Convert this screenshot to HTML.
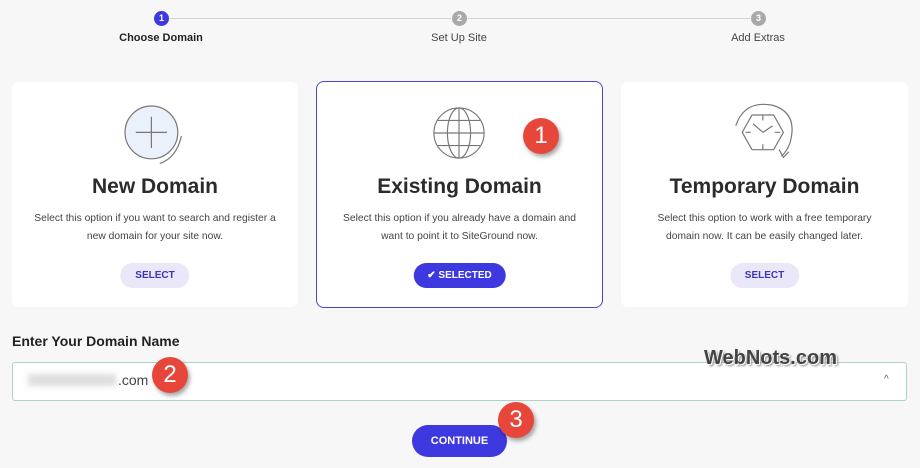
<!DOCTYPE html>
<html><head><style>
*{margin:0;padding:0;box-sizing:border-box}
body{width:920px;height:468px;background:#f7f7f7;font-family:"Liberation Sans",sans-serif;position:relative;overflow:hidden;color:#333}
.a{position:absolute}
.step{width:15px;height:15px;border-radius:50%;color:#fff;font-size:9px;font-weight:bold;text-align:center;line-height:15px;background:#a9a9a9}
.lbl{font-size:11px;color:#444;top:32px;transform:translateX(-50%);white-space:nowrap}
.line{height:1px;background:#d3d3d3;top:18px}
.card{background:#fff;border-radius:7px;top:82px;height:225px;text-align:center}
.card h2{position:absolute;top:93px;width:100%;font-size:21px;font-weight:bold;color:#2b2b2b}
.card p{position:absolute;top:128px;width:100%;font-size:10.3px;line-height:18px;color:#444}
.btn{position:absolute;top:181px;left:50%;transform:translateX(-50%);height:25px;border-radius:13px;font-size:10px;font-weight:bold;line-height:25px;padding:0 15px;background:#e9e7f8;color:#3b35b8}
.badge{width:36px;height:36px;border-radius:50%;background:#e6473a;color:#fff;font-size:24px;text-align:center;line-height:36px;box-shadow:2px 3px 4px rgba(0,0,0,.35)}
</style></head><body>
<div class="a line" style="left:170px;width:281px"></div>
<div class="a line" style="left:468px;width:282px"></div>
<div class="a step" style="left:154px;top:11px;background:#3d38e0">1</div>
<div class="a step" style="left:452px;top:11px">2</div>
<div class="a step" style="left:751px;top:11px">3</div>
<div class="a lbl" style="left:161px;font-weight:bold;color:#222">Choose Domain</div>
<div class="a lbl" style="left:459px">Set Up Site</div>
<div class="a lbl" style="left:758px">Add Extras</div>

<div class="a card" style="left:12px;width:286px">
<svg class="a" style="left:104px;top:18px" width="78" height="72" viewBox="0 0 64 60"><circle cx="29" cy="27" r="22" fill="#eaf1fb" stroke="#777" stroke-width="1"/><path d="M29 14V40M16 27H42" stroke="#777" stroke-width="1"/><path d="M54 30Q50 48 36 53" fill="none" stroke="#777" stroke-width="1"/></svg>
<h2>New Domain</h2><p>Select this option if you want to search and register a<br>new domain for your site now.</p><div class="btn">SELECT</div></div>

<div class="a card" style="left:317px;width:285px;box-shadow:0 0 0 1px #4a44c8">
<svg class="a" style="left:114px;top:23px" width="56" height="56" viewBox="0 0 58 58"><g fill="none" stroke="#777" stroke-width="1.2"><circle cx="29" cy="29" r="26"/><ellipse cx="29" cy="29" rx="12" ry="26"/><path d="M29 3V55M3 29H55M7 16H51M7 42H51"/></g></svg>
<h2>Existing Domain</h2><p>Select this option if you already have a domain and<br>want to point it to SiteGround now.</p><div class="btn" style="background:#3d38e0;color:#fff;padding:0 14px">✔ SELECTED</div></div>

<div class="a card" style="left:621px;width:287px">
<svg class="a" style="left:106px;top:20px" width="76" height="65" viewBox="0 0 70 60"><g fill="none" stroke="#777" stroke-width="1.1"><path d="M14 28L23 12H43L52 28L43 44H23Z"/><path d="M33 12V17M33 39V44M17 28H22M44 28H49M33 28L24 20M33 28L42 22"/><path d="M8 22Q16 -2 42 3Q66 10 58 38Q55 46 50 50"/><path d="M48 44L52 51L57 46"/></g></svg>
<h2>Temporary Domain</h2><p>Select this option to work with a free temporary<br>domain now. It can be easily changed later.</p><div class="btn">SELECT</div></div>

<div class="a badge" style="left:523px;top:118px">1</div>

<div class="a" style="left:12px;top:333px;font-size:14px;font-weight:bold;color:#222">Enter Your Domain Name</div>
<div class="a" style="left:12px;top:362px;width:895px;height:39px;background:#fff;border:1px solid #a9d6bf;border-radius:3px"></div>
<div class="a" style="left:28px;top:374px;width:88px;height:12px;background:#ddd;filter:blur(3px)"></div>
<div class="a" style="left:118px;top:372px;font-size:14px;color:#444">.com</div>
<div class="a" style="left:884px;top:374px;font-size:10px;color:#555">^</div>
<div class="a badge" style="left:152px;top:357px">2</div>
<div class="a" style="left:704px;top:347px;font-size:20px;font-weight:bold;color:#444;text-shadow:1px 1px 0 #fff,2px 2px 2px #888">WebNots.com</div>

<div class="a" style="left:412px;top:425px;width:95px;height:32px;border-radius:16px;background:#3d38e0;color:#fff;font-size:11px;font-weight:bold;text-align:center;line-height:32px">CONTINUE</div>
<div class="a badge" style="left:498px;top:402px">3</div>
</body></html>
